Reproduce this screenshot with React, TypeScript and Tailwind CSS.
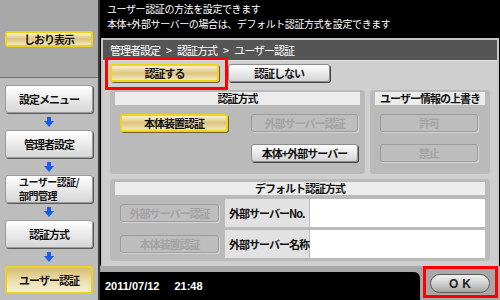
import React from 'react';

const jp = { fontFamily: '"Noto Sans CJK JP", "Noto Sans", sans-serif' };

function Arrow({ h = 'h-[17px]' }: { h?: string }) {
  return (
    <div className={`${h} flex items-center justify-center`}>
      <svg width="10" height="10" viewBox="0 0 10 10">
        <rect x="3" y="0" width="4" height="5" fill="#1a5ee8" />
        <polygon points="0,4 10,4 5,10" fill="#1a5ee8" />
      </svg>
    </div>
  );
}

function NavButton({ children, active }: { children: React.ReactNode; active?: boolean }) {
  return (
    <div
      className={`h-[28px] rounded-[3px] flex items-center justify-center text-center text-[11px] leading-[13px] font-bold tracking-[-1px] text-[#111] ${
        active
          ? 'border-2 border-[#ecd21a] bg-gradient-to-b from-[#d6bd72] via-[#eadcaa] to-[#f6efd2]'
          : 'border border-[#9a9a9a] bg-gradient-to-b from-[#ffffff] to-[#d6d6d6] shadow-[1px_1px_0_#5a5a5a]'
      }`}
    >
      {children}
    </div>
  );
}

function Btn({
  children,
  kind = 'normal',
  className = '',
}: {
  children: React.ReactNode;
  kind?: 'normal' | 'gold' | 'off';
  className?: string;
}) {
  const look =
    kind === 'gold'
      ? 'border-2 border-[#f0d416] bg-gradient-to-b from-[#faf3d2] via-[#dcc47c] to-[#f2e8bf] text-[#111] shadow-[1px_1px_0_#6a6040]'
      : kind === 'off'
      ? 'border border-[#9c9c9c] bg-[#bebebe] text-[#a3a3a3] shadow-[1px_1px_0_#d4d4d4]'
      : 'border border-[#8c8c8c] bg-gradient-to-b from-[#ffffff] to-[#d4d4d4] text-[#111] shadow-[1px_1px_0_#444]';
  return (
    <div
      className={`h-[18px] rounded-[3px] flex items-center justify-center text-[11px] leading-none font-bold tracking-[-1px] ${look} ${className}`}
    >
      {children}
    </div>
  );
}

function Strip({ children }: { children: React.ReactNode }) {
  return (
    <div className="h-[13px] bg-[#ececec] flex items-center justify-center text-[11px] leading-none font-bold tracking-[-1px] text-[#111]">
      {children}
    </div>
  );
}

export default function App() {
  return (
    <div className="relative w-[500px] h-[300px] flex overflow-hidden select-none" style={jp}>
      {/* left column */}
      <div className="w-[100px] flex flex-col bg-[#bdbdbd] border-r-2 border-[#3a3a3a]">
        <div className="h-[78px] bg-[#a8a8a8] border-b border-[#6e6e6e] pt-[31px] px-[5px]">
          <div className="h-[16px] rounded-[3px] border-2 border-[#ecd21a] bg-gradient-to-b from-[#faf3d2] via-[#dcc47c] to-[#f2e8bf] flex items-center justify-center text-[11px] leading-none font-bold tracking-[-1px] text-[#111]">
            しおり表示
          </div>
        </div>
        <div className="pt-[7px] pl-[5px] pr-[5px]">
          <NavButton>設定メニュー</NavButton>
          <Arrow />
          <NavButton>管理者設定</NavButton>
          <Arrow />
          <NavButton>
            <span className="text-left text-[10px] leading-[14.5px] tracking-[-0.5px]">
              ユーザー認証/
              <br />
              部門管理
            </span>
          </NavButton>
          <Arrow />
          <NavButton>認証方式</NavButton>
          <Arrow h="h-[18px]" />
          <NavButton active>ユーザー認証</NavButton>
        </div>
      </div>

      {/* main column */}
      <div className="flex-1 flex flex-col bg-black">
        <div className="h-[38px] pl-[7px] pt-[2px] text-white text-[10px] leading-[14.5px] tracking-[-0.4px]">
          <div>ユーザー認証の方法を設定できます</div>
          <div>本体+外部サーバーの場合は、デフォルト認証方式を設定できます</div>
        </div>

        <div className="h-[228px] ml-[1px] mr-[1px] border-2 border-b-0 border-[#c6c6c6] bg-[#cfcfcf] flex flex-col">
          <div className="h-[21px] bg-[#555555] border-b border-[#e2e2e2] flex items-center pl-[7px] text-white text-[11px] tracking-[-1px]">
            <span>管理者設定</span>
            <span className="mx-[6px]">&gt;</span>
            <span>認証方式</span>
            <span className="mx-[6px]">&gt;</span>
            <span>ユーザー認証</span>
          </div>

          <div className="pl-[7px] pr-[5px]">
            <div className="flex gap-[9px] pt-[3px]">
              <Btn kind="gold" className="w-[109px]">認証する</Btn>
              <Btn className="w-[102px]">認証しない</Btn>
            </div>

            <div className="flex gap-[5px] mt-[8px]">
              <div className="w-[255px] h-[84px] rounded-[4px] bg-[#bababa] px-[5px] pt-[2px]">
                <Strip>認証方式</Strip>
                <div className="flex justify-between pl-[5px] pr-[2px] mt-[9px]">
                  <Btn kind="gold" className="w-[108px]">本体装置認証</Btn>
                  <Btn kind="off" className="w-[107px]">外部サーバー認証</Btn>
                </div>
                <div className="flex justify-end pr-[2px] mt-[12px]">
                  <Btn className="w-[107px] tracking-[-0.5px]">本体+外部サーバー</Btn>
                </div>
              </div>
              <div className="w-[120px] h-[84px] rounded-[4px] bg-[#bababa] px-[5px] pt-[2px]">
                <Strip>ユーザー情報の上書き</Strip>
                <div className="pl-[5px] pr-[7px] mt-[9px] flex flex-col gap-[12px]">
                  <Btn kind="off">許可</Btn>
                  <Btn kind="off">禁止</Btn>
                </div>
              </div>
            </div>

            <div className="mt-[5px] w-[380px] h-[82px] rounded-[4px] bg-[#bababa] px-[5px] pt-[3px]">
              <Strip>デフォルト認証方式</Strip>
              <div className="mt-[4px] flex flex-col gap-[3px]">
                {[
                  ['外部サーバー認証', '外部サーバーNo.'],
                  ['本体装置認証', '外部サーバー名称'],
                ].map(([b, l]) => (
                  <div key={l} className="flex items-center h-[28px]">
                    <Btn kind="off" className="w-[99px] ml-[5px]">{b}</Btn>
                    <div className="ml-[6px] w-[84px] h-full bg-[#e2e2e2] flex items-center pl-[4px] text-[11px] font-bold tracking-[-1px] text-[#111]">
                      {l}
                    </div>
                    <div className="ml-[1px] flex-1 h-full bg-white" />
                  </div>
                ))}
              </div>
            </div>
          </div>
        </div>

        <div className="flex-1 flex bg-[#a8a8a8]">
          <div
            className="mt-[6px] w-[320px] bg-black rounded-tr-[6px] flex items-center pl-[5px] text-white text-[11px] font-bold"
            style={{ fontFamily: '"Liberation Sans", Arial, sans-serif' }}
          >
            <span>2011/07/12</span>
            <span className="ml-[15px]">21:48</span>
          </div>
          <div className="flex-1 flex items-start justify-center pt-[8px]">
            <div
              className="w-[60px] h-[19px] rounded-full border border-[#5a5a5a] bg-gradient-to-b from-[#f2f2f2] via-[#d0d0d0] to-[#a4a4a4] flex items-center justify-center text-[12px] font-bold tracking-[4px] pl-[4px] text-[#222]"
              style={{ fontFamily: '"Liberation Sans", Arial, sans-serif' }}
            >
              OK
            </div>
          </div>
        </div>
      </div>

      {/* highlight frames */}
      <div className="absolute left-[105px] top-[57px] w-[123px] h-[33px] border-[3px] border-[#ff0000] pointer-events-none" />
      <div className="absolute left-[423px] top-[266px] w-[75px] h-[32px] border-[3px] border-[#ff0000] pointer-events-none" />
    </div>
  );
}
